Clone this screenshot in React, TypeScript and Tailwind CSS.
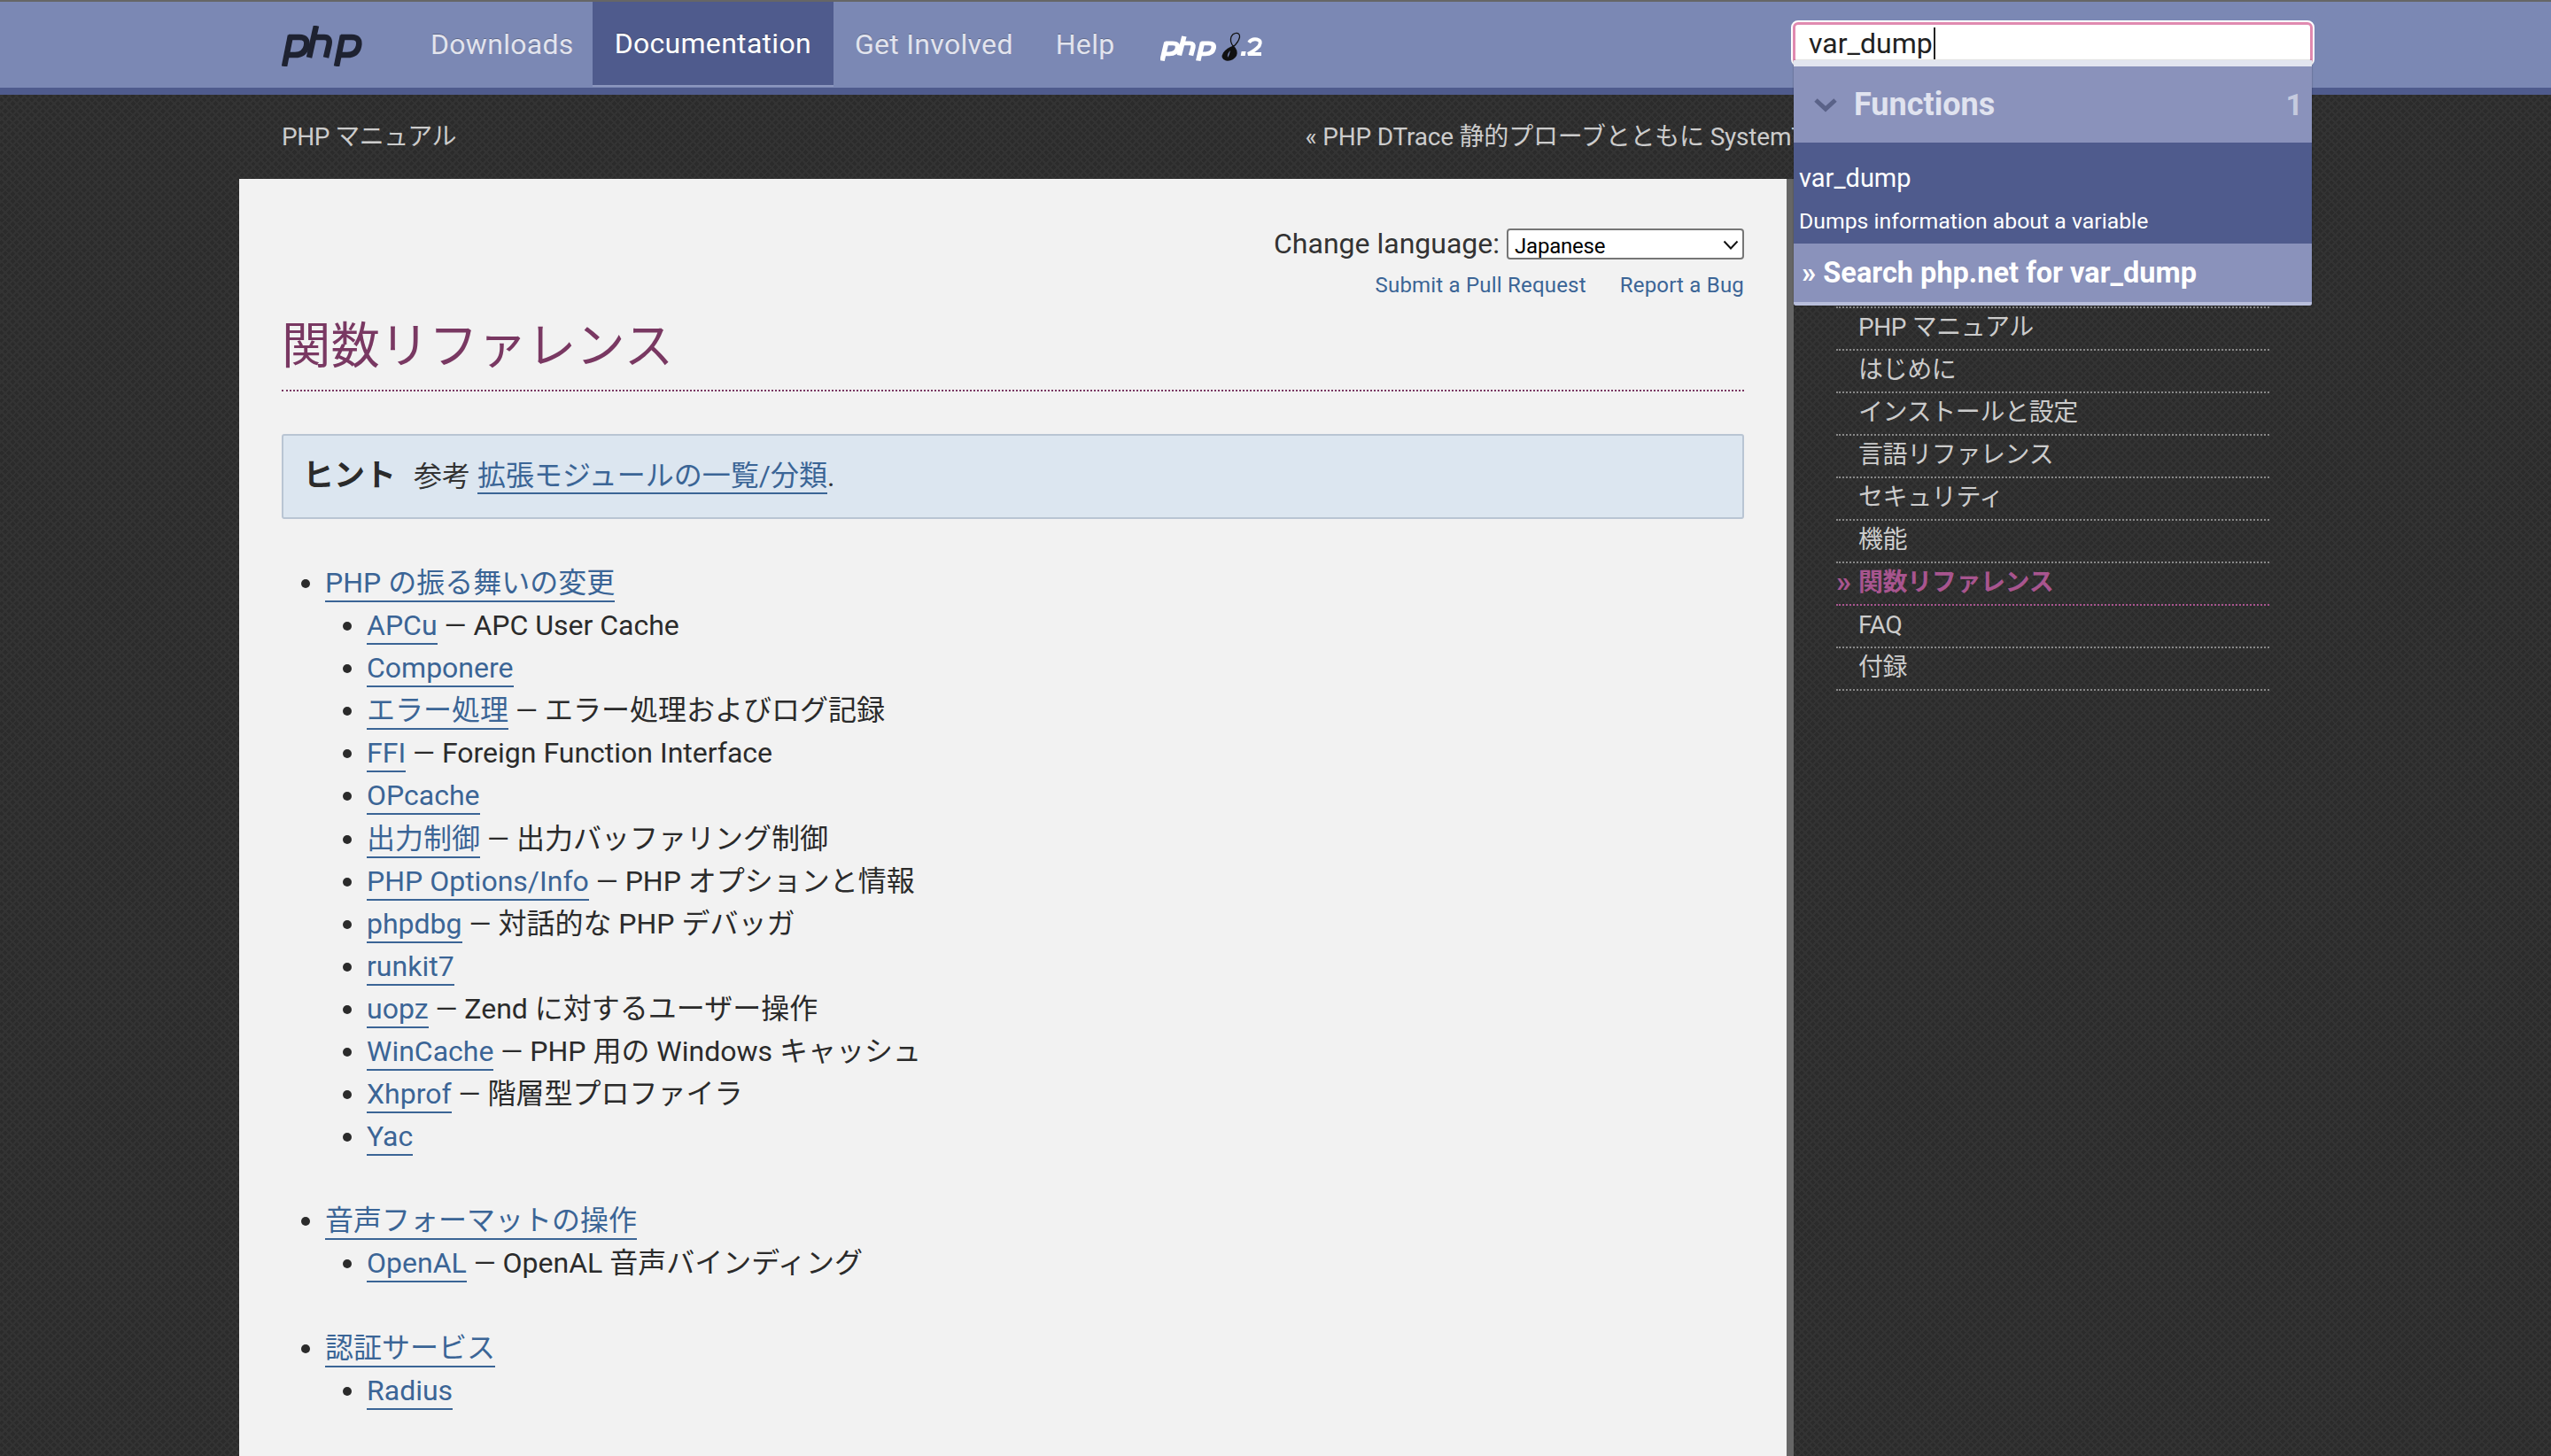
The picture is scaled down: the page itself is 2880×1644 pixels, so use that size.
const jp = "font-['Roboto','Noto_Sans_CJK_JP',sans-serif]"

const docs = [
  ['APCu', 'APC User Cache'],
  ['Componere', ''],
  ['エラー処理', 'エラー処理およびログ記録'],
  ['FFI', 'Foreign Function Interface'],
  ['OPcache', ''],
  ['出力制御', '出力バッファリング制御'],
  ['PHP Options/Info', 'PHP オプションと情報'],
  ['phpdbg', '対話的な PHP デバッガ'],
  ['runkit7', ''],
  ['uopz', 'Zend に対するユーザー操作'],
  ['WinCache', 'PHP 用の Windows キャッシュ'],
  ['Xhprof', '階層型プロファイラ'],
  ['Yac', ''],
]

const sections = [
  { title: 'PHP の振る舞いの変更', items: docs },
  { title: '音声フォーマットの操作', items: [['OpenAL', 'OpenAL 音声バインディング']] },
  { title: '認証サービス', items: [['Radius', '']] },
]

const sideLinks = ['PHP マニュアル', 'はじめに', 'インストールと設定', '言語リファレンス', 'セキュリティ', '機能', '関数リファレンス', 'FAQ', '付録']

function PhpLetters({ color, weight }: { color: string; weight: string }) {
  return (
    <g fill="none" stroke={color} strokeWidth={weight}>
      <path d="M10 11 L3 46" />
      <path d="M8 13 H20 Q30 13 28 23 Q26 33 15 33 H5" />
      <path d="M39 0 L31 36" />
      <path d="M36 13 H48 Q55 13 53.5 21 L50 36" />
      <path d="M69 11 L62 46" />
      <path d="M67 13 H79 Q89 13 87 23 Q85 33 74 33 H64" />
    </g>
  )
}

function Php82Logo() {
  return (
    <svg width="118" height="34" viewBox="0 0 236 68" className="shrink-0">
      <g transform="translate(0 10) scale(1.38 1.2)">
        <PhpLetters color="#fff" weight="8" />
      </g>
      {/* the twisted 8 */}
      <path d="M170 3 Q180 2 179 12 Q176 24 165 33 Q156 22 160 11 Q163 4 170 3 Z" fill="none" stroke="#111" strokeWidth="2.5" />
      <path d="M165 31 Q177 42 172 54 Q164 67 148 65 Q134 60 142 47 Q150 36 165 31 Z" fill="#111" />
      <path d="M158 42 Q150 50 152 58 Q156 52 158 42 Z" fill="#7b88b4" />
      <rect x="191" y="44" width="10" height="10" transform="skewX(-10)" fill="#fff" />
      <path d="M200 24 Q206 15 218 17 Q230 20 223 32 Q214 42 198 50 H228" fill="none" stroke="#fff" strokeWidth="8" />
    </svg>
  )
}

export default function App() {
  return (
    <div className={`relative h-[1644px] overflow-hidden bg-[#2b2b2b] bg-[repeating-linear-gradient(45deg,#333_0,#333_2px,transparent_2px,transparent_6px),repeating-linear-gradient(-45deg,#333_0,#333_2px,transparent_2px,transparent_6px)] ${jp}`}>
      <header className="h-[107px] border-t-2 border-t-[#666] border-b-8 border-b-[#4f5b8d] bg-[#7b88b4] flex pl-[318px] pr-[267px] items-stretch">
        <svg width="92" height="46" viewBox="0 0 92 46" className="self-center mt-[2px] mr-[52px] shrink-0">
          <PhpLetters color="#1e2231" weight="6.5" />
        </svg>
        <nav className="flex h-[96px] text-[32px] tracking-[0.3px] [text-shadow:0_-1px_0_rgba(0,0,0,0.25)]">
          <a className="pl-[24px] pr-[21px] flex items-center text-[#e2e4ee]">Downloads</a>
          <a className="px-[25px] flex items-center text-white bg-[#4f5b8d] border-b-2 border-b-[#8c97be]">Documentation</a>
          <a className="px-[24px] flex items-center text-[#e2e4ee]">Get Involved</a>
          <a className="px-[24px] flex items-center text-[#e2e4ee]">Help</a>
        </nav>
        <div className="self-center ml-[28px] mt-[4px]">
          <Php82Logo />
        </div>
        <div className="relative ml-auto w-[591px] self-start mt-[21px]">
          <div className="h-[52px] border-2 border-white rounded-[8px] bg-[#e08ab0] p-[3px]">
            <div className="h-full bg-white rounded-[3px] pl-[15px] flex items-center text-[32px] text-[#222] leading-none">
              var_dump<span className="inline-block w-[2px] h-[36px] bg-[#222] ml-[1px]" />
            </div>
          </div>
          {/* suggestions dropdown, lies over the page */}
          <div className="absolute left-[3px] top-[45px] w-[585px] z-10 rounded-b-[3px] overflow-hidden shadow-[0_0_2px_rgba(0,0,0,0.4)]">
            <div className="h-[7px] bg-[#e2e5ef]" />
            <div className="h-[86px] bg-[#8a92bb] flex items-center pl-[22px] pr-[10px]">
              <svg width="28" height="18" viewBox="0 0 28 18" className="mr-[18px]">
                <path d="M3 4 L14 14 L25 4" fill="none" stroke="#5a6288" strokeWidth="5" />
              </svg>
              <span className="text-[36px] font-bold text-[#e0e3ef]">Functions</span>
              <span className="ml-auto text-[34px] font-bold text-[#c5cade]">1</span>
            </div>
            <div className="h-[114px] bg-[#4f5b8d] pl-[6px] pt-[9px] text-white flex flex-col justify-center">
              <div className="text-[29px] leading-[48px]">var_dump</div>
              <div className="text-[24.8px] leading-[38px] mt-[6px]">Dumps information about a variable</div>
            </div>
            <div className="h-[70px] bg-[#8a92bb] border-b-[4px] border-b-[#b8bedb] pl-[9px] flex items-center text-[32.5px] font-bold text-white">
              » Search php.net for var_dump
            </div>
          </div>
        </div>
      </header>

      <div className="h-[95px] flex items-center pl-[318px] pr-[722px] justify-between text-[28px] text-[#ccc]">
        <span className="tracking-[-0.5px]">PHP マニュアル</span>
        <span className="whitespace-nowrap tracking-[-0.2px]">« PHP DTrace 静的プローブとともに SystemTap を使う</span>
      </div>

      <div className="flex pl-[270px]">
        <main className="w-[1755px] h-[1442px] bg-[#f2f2f2] border-r-8 border-r-[#666] px-[48px] text-[#333]">
          <div className="flex justify-end items-center gap-[8px] pt-[54px] h-[93px] text-[32px]">
            <span className="-mt-[2px]">Change language:</span>
            <div className="relative">
              <select className="block appearance-none w-[268px] h-[35px] bg-white border-2 border-[#767676] rounded-[4px] text-[24px] tracking-[-0.2px] text-black pl-[7px]" defaultValue="ja">
                <option value="ja">Japanese</option>
              </select>
              <svg width="18" height="12" viewBox="0 0 18 12" className="absolute right-[6px] top-[13px]">
                <path d="M1.5 1.5 L9 9.5 L16.5 1.5" fill="none" stroke="#111" strokeWidth="2" />
              </svg>
            </div>
          </div>
          <div className="flex justify-end gap-[38px] text-[24px] tracking-[0.2px] text-[#3b6596] leading-[36px] mt-[9px]">
            <a>Submit a Pull Request</a>
            <a>Report a Bug</a>
          </div>
          <h1 className="text-[55.4px] text-[#793862] leading-[76px] mt-[14px] pb-[10px] border-b-2 border-dotted border-b-[#793862]">関数リファレンス</h1>

          <div className="mt-[48px] h-[96px] flex items-center bg-[#dce6f0] border-2 border-[#b9c5d3] rounded-[3px] pl-[22px] text-[32px]">
            <strong className="text-[35px] font-bold mr-[20px] text-[#2b2b2b]">ヒント</strong>
            <span>参考&nbsp;</span>
            <a className="text-[#3b6596] border-b-2 border-b-[#3b6596] leading-[38px]">拡張モジュールの一覧/分類</a>
            <span>.</span>
          </div>

          <ul className="mt-[48px] pl-[49px] list-disc text-[32px] leading-[48.1px] text-[#2b2b2b]">
            {sections.map(s => (
              <li key={s.title} className="mb-[47px]">
                <a className="text-[#3b6596] border-b-2 border-b-[#3b6596] pb-[1px]">{s.title}</a>
                <ul className="pl-[47px] list-disc">
                  {s.items.map(([name, desc]) => (
                    <li key={name}>
                      <a className="text-[#3b6596] border-b-2 border-b-[#3b6596] pb-[1px]">{name}</a>
                      {desc ? ` — ${desc}` : ''}
                    </li>
                  ))}
                </ul>
              </li>
            ))}
          </ul>
        </main>

        <aside className="w-[489px] ml-[48px] mt-[144px] text-[28px] tracking-[-0.4px]">
          <ul className="border-t-2 border-dotted border-t-[#888]">
            {sideLinks.map(l => {
              const on = l === '関数リファレンス'
              return (
                <li key={l} className={`h-[48px] leading-[44px] border-b-2 border-dotted flex ${on ? 'border-b-[#a8558f] text-[#a8558f] font-bold' : 'border-b-[#888] text-[#ccc]'}`}>
                  <span className="w-[25px] text-[34px] leading-[40px]">{on ? '»' : ''}</span>
                  {l}
                </li>
              )
            })}
          </ul>
        </aside>
      </div>
    </div>
  )
}
